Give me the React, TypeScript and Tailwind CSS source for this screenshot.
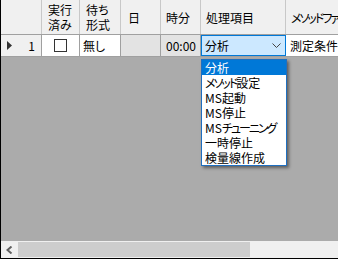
import React from "react";

function K({ children }: { children: React.ReactNode }) {
  return <span className="tracking-[-2px]">{children}</span>;
}

export default function App() {
  const items: React.ReactNode[] = [
    "分析",
    <><K>メソッド</K>設定</>,
    "MS起動",
    "MS停止",
    <>MS<K>チューニング</K></>,
    "一時停止",
    "検量線作成",
  ];
  return (
    <div className="relative w-[338px] h-[259px] overflow-hidden bg-[#ababab] border-l border-b border-black flex flex-col text-[12px] leading-[15px] text-black font-['Noto_Sans_CJK_JP','Noto_Sans',sans-serif] [font-feature-settings:'palt']">
      {/* header */}
      <div className="flex h-[35px] shrink-0 bg-[#f0f0f0] border-b border-[#a0a0a0]">
        <div className="w-[41px] shrink-0 border-r border-[#c8c8c8]" />
        <div className="w-[38px] shrink-0 border-r border-[#c8c8c8] flex items-center pl-[6px]">
          <div>実行<br />済み</div>
        </div>
        <div className="w-[41px] shrink-0 border-r border-[#c8c8c8] flex items-center pl-[6px]">
          <div>待ち<br />形式</div>
        </div>
        <div className="w-[40px] shrink-0 border-r border-[#c8c8c8] flex items-center pl-[7px]">日</div>
        <div className="w-[40px] shrink-0 border-r border-[#c8c8c8] flex items-center pl-[5px]">時分</div>
        <div className="w-[85px] shrink-0 border-r border-[#c8c8c8] flex items-center pl-[5px]">処理項目</div>
        <div className="flex-1 min-w-0 flex items-center pl-[5px] whitespace-nowrap overflow-hidden"><K>メソッドファイル</K></div>
      </div>
      {/* data row */}
      <div className="flex h-[22px] shrink-0 border-b border-[#a0a0a0]">
        <div className="w-[41px] shrink-0 bg-[#f0f0f0] border-r border-[#a0a0a0] flex items-center justify-between pl-[6px] pr-[6px]">
          <svg width="5" height="9" viewBox="0 0 5 9"><path d="M0 0 L5 4.5 L0 9 Z" fill="#333" /></svg>
          <span>1</span>
        </div>
        <div className="w-[38px] shrink-0 bg-white border-r border-[#a0a0a0] flex items-center justify-center">
          <div className="w-[13px] h-[13px] border border-[#333] bg-white" />
        </div>
        <div className="w-[41px] shrink-0 bg-white border-r border-[#a0a0a0] flex items-center pl-[3px]">無し</div>
        <div className="w-[40px] shrink-0 bg-[#e3e3e3] border-r border-[#a0a0a0]" />
        <div className="w-[40px] shrink-0 bg-[#e3e3e3] border-r border-[#a0a0a0] flex items-center justify-end pr-[4px]">00:00</div>
        <div className="w-[85px] shrink-0 bg-[#cce8ff] border border-[#0078d7] flex items-center justify-between pl-[3px] pr-[4px]">
          <span>分析</span>
          <svg width="9" height="5" viewBox="0 0 9 5"><path d="M0.5 0.5 L4.5 4.5 L8.5 0.5" fill="none" stroke="#444" strokeWidth="1" /></svg>
        </div>
        <div className="flex-1 min-w-0 bg-white flex items-center pl-[4px] whitespace-nowrap overflow-hidden">測定条件</div>
      </div>
      <div className="flex-1" />
      {/* scrollbar */}
      <div className="h-[17px] shrink-0 bg-[#f0f0f0] flex items-center">
        <div className="w-[17px] h-full flex items-center justify-center">
          <svg width="7" height="8" viewBox="0 0 7 8"><path d="M5.5 0.5 L1.5 4 L5.5 7.5" fill="none" stroke="#606060" strokeWidth="2" /></svg>
        </div>
        <div className="w-[232px] h-[15px] bg-[#cdcdcd]" />
      </div>
      {/* dropdown */}
      <div className="absolute left-[200px] top-[59px] w-[86px] border border-[#1f6fc0] bg-white shadow-[2px_2px_3px_rgba(0,0,0,0.45)]">
        {items.map((t, i) => (
          <div key={i} className={`h-[15px] pl-[3px] whitespace-nowrap ${i === 0 ? "bg-[#0078d7] text-white" : ""}`}>{t}</div>
        ))}
      </div>
    </div>
  );
}
